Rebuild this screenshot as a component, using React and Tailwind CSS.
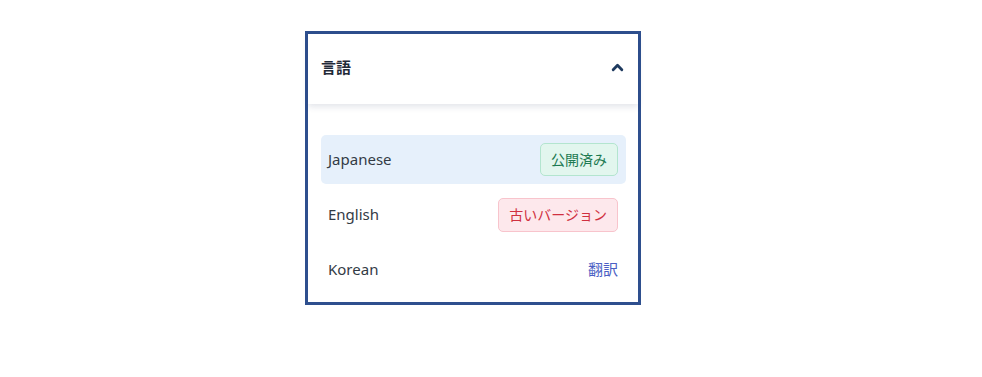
import React from "react";

const languages = [
  { name: "Japanese", status: "published", active: true },
  { name: "English", status: "outdated" },
  { name: "Korean", status: "translate" },
];

const StatusBadge = ({ status }) => {
  if (status === "published") {
    return (
      <span className="h-[33px] px-[10px] flex items-center rounded-[5px] border border-[#b3e5cf] bg-[#e2f6ee] text-[#1d7a52] text-[14px]">
        公開済み
      </span>
    );
  }
  if (status === "outdated") {
    return (
      <span className="h-[34px] px-[10px] flex items-center rounded-[5px] border border-[#f8c4cc] bg-[#fde8ec] text-[#d03040] text-[14px]">
        古いバージョン
      </span>
    );
  }
  return <span className="text-[15px] text-[#4b5fc4]">翻訳</span>;
};

export default function App() {
  return (
    <div
      className="w-[982px] h-[377px] bg-white pt-[31px] pl-[305px]"
      style={{ fontFamily: '"Noto Sans", "Noto Sans CJK JP", sans-serif' }}
    >
      <div className="w-[336px] h-[274px] border-[3px] border-[#2e4f8e] bg-white flex flex-col">
        {/* header */}
        <div className="h-[70px] shrink-0 flex items-center justify-between pl-[13px] pr-[14px] shadow-[0_3px_6px_rgba(30,50,90,0.12)] relative z-10">
          <span className="text-[15px] font-bold text-[#1f2937] -mt-[3px]">言語</span>
          <svg width="13" height="13" viewBox="0 0 12 12" fill="none" className="-mt-[3px]">
            <path
              d="M2 8 L6 4 L10 8"
              stroke="#1e3a5f"
              strokeWidth="2.6"
              strokeLinecap="round"
              strokeLinejoin="round"
            />
          </svg>
        </div>

        {/* list */}
        <div className="flex flex-col gap-[6px] pt-[31px] px-[13px] pr-[12px]">
          {languages.map((lang) => (
            <div
              key={lang.name}
              className={`h-[49px] flex items-center justify-between pl-[7px] pr-[8px] rounded-[5px] ${
                lang.active ? "bg-[#e6f0fb]" : ""
              }`}
            >
              <span className="text-[15px] text-[#333b45]">{lang.name}</span>
              <StatusBadge status={lang.status} />
            </div>
          ))}
        </div>
      </div>
    </div>
  );
}
